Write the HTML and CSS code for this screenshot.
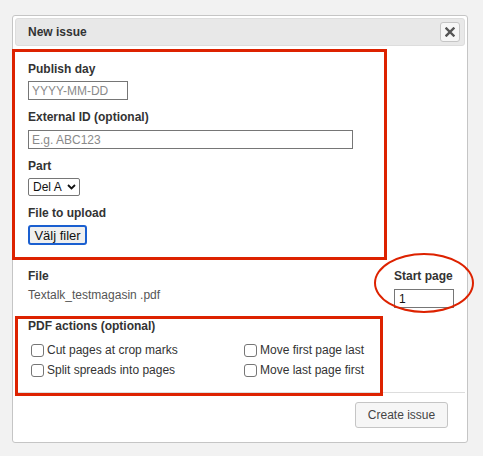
FILE: index.html
```html
<!DOCTYPE html>
<html>
<head>
<meta charset="utf-8">
<link rel="stylesheet" href="styles.css">
</head>
<body>
<div class="dialog">
  <div class="titlebar">
    <span class="title">New issue</span>
    <button class="close" type="button" aria-label="Close">
      <svg width="10" height="10" viewBox="0 0 10 10"><path d="M1.5 1.5 L8.5 8.5 M8.5 1.5 L1.5 8.5" stroke="#555" stroke-width="2.4" stroke-linecap="square"/></svg>
    </button>
  </div>
  <div class="content">
    <div class="group">
      <label class="lbl">Publish day</label>
      <input class="txt date" type="text" placeholder="YYYY-MM-DD">
    </div>
    <div class="group">
      <label class="lbl lbl-wide">External ID (optional)</label>
      <input class="txt ext" type="text" placeholder="E.g. ABC123">
    </div>
    <div class="group">
      <label class="lbl">Part</label>
      <div class="select"><span>Del A</span>
        <svg width="9" height="6" viewBox="0 0 9 6"><path d="M1 1 L4.5 4.5 L8 1" fill="none" stroke="#111" stroke-width="1.8"/></svg>
      </div>
    </div>
    <div class="group">
      <label class="lbl">File to upload</label>
      <button class="filebtn" type="button">Välj filer</button>
    </div>
    <div class="file-row">
      <div class="file-col">
        <div class="lbl">File</div>
        <div class="filename">Textalk_testmagasin .pdf</div>
      </div>
      <div class="start-col">
        <div class="lbl lbl-wide">Start page</div>
        <input class="txt start" type="text" value="1">
      </div>
    </div>
    <div class="lbl">PDF actions (optional)</div>
    <div class="checks">
      <label class="check"><span class="box"></span>Cut pages at crop marks</label>
      <label class="check"><span class="box"></span>Move first page last</label>
      <label class="check"><span class="box"></span>Split spreads into pages</label>
      <label class="check"><span class="box"></span>Move last page first</label>
    </div>
  </div>
  <div class="buttonpane">
    <button class="create" type="button">Create issue</button>
  </div>
</div>
<div class="mark mark-top"></div>
<div class="mark mark-pdf"></div>
<div class="mark mark-oval"></div>
</body>
</html>
```
FILE: styles.css
```css
html, body {
  margin: 0;
  padding: 0;
}
body {
  background: #f2f2f2;
  font-family: "Liberation Sans", Arial, sans-serif;
  font-size: 12px;
  color: #333;
  width: 483px;
  height: 456px;
  position: relative;
  overflow: hidden;
  padding-top: 15px;
  padding-left: 12px;
  box-sizing: border-box;
}
.dialog {
  width: 456px;
  height: 428px;
  box-sizing: border-box;
  background: #fff;
  border: 1px solid #c5c5c5;
  border-radius: 3px;
  padding: 2px;
  display: flex;
  flex-direction: column;
}
.titlebar {
  height: 28px;
  box-sizing: border-box;
  background: #e8e8e8;
  border: 1px solid #dddddd;
  border-radius: 3px;
  display: flex;
  align-items: center;
  justify-content: space-between;
  padding: 0 4px 0 12px;
}
.title {
  font-weight: bold;
  font-size: 12px;
  color: #333;
}
.close {
  width: 20px;
  height: 20px;
  box-sizing: border-box;
  border: 1px solid #c5c5c5;
  border-radius: 3px;
  background: #f6f6f6;
  padding: 0;
  display: flex;
  align-items: center;
  justify-content: center;
}
.content {
  flex: 1;
  padding: 16px 11px 0 13px;
}
.group {
  margin-bottom: 10px;
}
.lbl {
  display: block;
  font-weight: bold;
  line-height: 14px;
  margin-bottom: 5px;
  color: #333;
}
.lbl-wide {
  margin-bottom: 6px;
}
.txt {
  display: block;
  box-sizing: border-box;
  height: 19px;
  border: 1px solid #767676;
  border-radius: 0;
  padding: 0 3px;
  font-family: "Liberation Sans", Arial, sans-serif;
  font-size: 12px;
  color: #111;
  margin: 0;
}
.txt::placeholder {
  color: #8a8a8a;
}
.date {
  width: 100px;
}
.ext {
  width: 325px;
}
.start {
  width: 60px;
  padding-left: 4px;
}
.select {
  display: inline-flex;
  align-items: center;
  box-sizing: border-box;
  width: 52px;
  height: 18px;
  border: 1px solid #767676;
  border-radius: 2px;
  padding: 0 3px 0 4px;
  font-size: 12px;
  color: #111;
  justify-content: space-between;
}
.filebtn {
  display: block;
  box-sizing: border-box;
  width: 59px;
  height: 20px;
  margin: 0;
  padding: 0;
  border: 2px solid #1a5fd0;
  border-radius: 3px;
  background: #efefef;
  font-family: "Liberation Sans", Arial, sans-serif;
  font-size: 13px;
  color: #111;
}
.file-row {
  display: flex;
  justify-content: space-between;
  align-items: flex-start;
  margin-top: 24px;
  margin-bottom: 11px;
}
.filename {
  line-height: 14px;
  color: #555;
  margin-top: 1px;
}
.checks {
  display: grid;
  grid-template-columns: 213px 140px;
  margin-top: 7px;
  margin-left: 3px;
}
.check {
  display: flex;
  align-items: center;
  height: 20px;
  color: #333;
  white-space: nowrap;
}
.box {
  width: 13px;
  height: 13px;
  box-sizing: border-box;
  border: 1px solid #767676;
  border-radius: 3px;
  background: #fff;
  margin-right: 3px;
  flex: none;
}
.buttonpane {
  border-top: 1px solid #dddddd;
  padding: 9px 17px 12px 0;
  display: flex;
  justify-content: flex-end;
}
.create {
  box-sizing: border-box;
  width: 93px;
  height: 26px;
  margin: 0;
  border: 1px solid #c5c5c5;
  border-radius: 3px;
  background: #f6f6f6;
  font-family: "Liberation Sans", Arial, sans-serif;
  font-size: 12px;
  color: #454545;
  padding: 0;
}
.mark {
  position: absolute;
  box-sizing: border-box;
  border: 3px solid #dd2200;
  pointer-events: none;
}
.mark-top {
  left: 12px;
  top: 49px;
  width: 375px;
  height: 211px;
}
.mark-pdf {
  left: 15px;
  top: 316px;
  width: 368px;
  height: 80px;
}
.mark-oval {
  left: 374px;
  top: 253px;
  width: 100px;
  height: 60px;
  border-width: 2.5px;
  border-radius: 50%;
}
```
